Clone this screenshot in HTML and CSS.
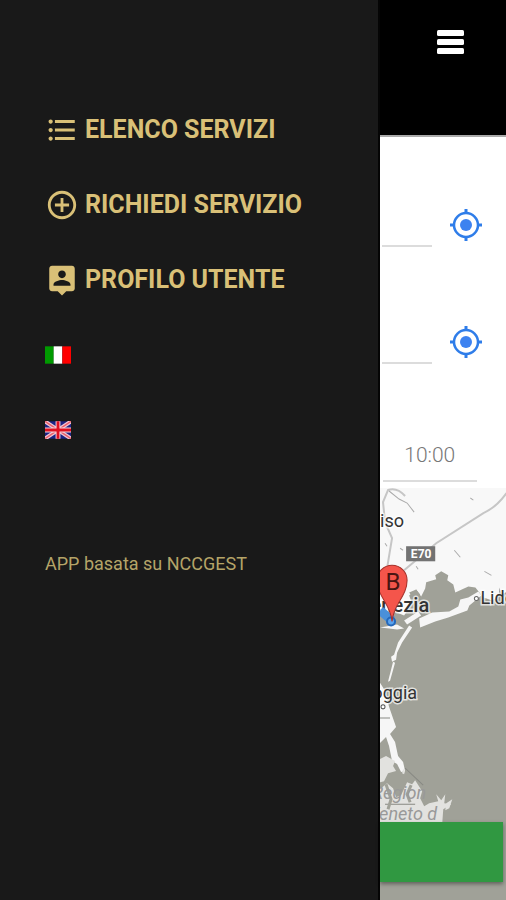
FILE: index.html
```html
<!DOCTYPE html>
<html lang="it">
<head>
  <meta charset="UTF-8">
  <meta name="viewport" content="width=device-width, initial-scale=1.0">
  <title>Richiedi servizio</title>
  <link rel="stylesheet" href="styles.css">
</head>

<body>
  <nav class="menu">
    <a class="menu-item" href="#elenco">
      <svg class="menu-icon" viewBox="0 0 24 24">
        <path d="M4 10.500c-.83 0-1.500.67-1.500 1.500s.67 1.500 1.500 1.500 1.500-.67 1.500-1.500-.67-1.500-1.500-1.500zm0-6c-.83 0-1.500.67-1.500 1.500S3.170 7.500 4 7.500 5.500 6.830 5.500 6 4.830 4.500 4 4.500zm0 12c-.83 0-1.500.68-1.500 1.500s.68 1.500 1.500 1.500 1.500-.68 1.500-1.500-.67-1.500-1.500-1.500zM7 19h14v-2H7v2zm0-6h14v-2H7v2zm0-8v2h14V5H7z"/>
      </svg>
      <span>ELENCO SERVIZI</span>
    </a>
    <a class="menu-item" href="#richiedi">
      <svg class="menu-icon" viewBox="0 0 24 24">
        <path d="M13 7h-2v4H7v2h4v4h2v-4h4v-2h-4V7zm-1-5C6.480 2 2 6.480 2 12s4.480 10 10 10 10-4.480 10-10S17.520 2 12 2zm0 18c-4.410 0-8-3.590-8-8s3.590-8 8-8 8 3.590 8 8-3.590 8-8 8z"/>
      </svg>
      <span>RICHIEDI SERVIZIO</span>
    </a>
    <a class="menu-item" href="#profilo">
      <svg class="menu-icon" viewBox="0 0 24 24">
        <path d="M19 2H5c-1.110 0-2 .9-2 2v14c0 1.100.89 2 2 2h4l3 3 3-3h4c1.100 0 2-.9 2-2V4c0-1.100-.9-2-2-2zm-7 3.300c1.490 0 2.700 1.210 2.700 2.700s-1.210 2.700-2.700 2.700S9.300 9.490 9.300 8s1.210-2.700 2.700-2.700zM18 16H6v-.9c0-2 4-3.100 6-3.100s6 1.100 6 3.100v.9z"/>
      </svg>
      <span>PROFILO UTENTE</span>
    </a>
    <a class="menu-item" href="#it" aria-label="Italiano">
      <svg class="flag" viewBox="0 0 27 18">
        <rect width="9" height="18" fill="#009a00"/>
        <rect x="9" width="9" height="18" fill="#fff"/>
        <rect x="18" width="9" height="18" fill="#f00"/>
      </svg>
    </a>
    <a class="menu-item" href="#en" aria-label="English">
      <svg class="flag" viewBox="0 0 27 18">
        <rect width="27" height="18" fill="#1c2484"/>
        <path d="M0 0l27 18M27 0L0 18" stroke="#f3c8d4" stroke-width="4"/>
        <path d="M0 0l27 18M27 0L0 18" stroke="#e8606c" stroke-width="1.500"/>
        <path d="M13.500 0v18M0 9h27" stroke="#f6d5dc" stroke-width="5"/>
        <path d="M13.500 0v18M0 9h27" stroke="#e01020" stroke-width="3"/>
      </svg>
    </a>
    <p class="credits">APP basata su NCCGEST</p>
  </nav>

  <main class="page">
    <header class="topbar">
      <button class="toggle" type="button" aria-label="Menu">
        <svg viewBox="0 0 28 24" width="28" height="24">
          <rect x="1" y="0" width="27" height="6" rx="1.500"/>
          <rect x="1" y="9" width="27" height="6" rx="1.500"/>
          <rect x="1" y="18" width="27" height="6" rx="1.500"/>
        </svg>
      </button>
    </header>

    <form class="form">
      <div class="row">
        <input class="field" type="text" aria-label="Partenza">
        <button class="locate" type="button" aria-label="Posizione di partenza">
          <svg viewBox="0 0 32 32" width="32" height="32">
            <path d="M16 0v5M16 27v5M0 16h5M27 16h5" stroke-width="3"/>
            <circle cx="16" cy="16" r="12" stroke-width="2.500"/>
            <circle class="dot" cx="16" cy="16" r="6"/>
          </svg>
        </button>
      </div>
      <div class="row">
        <input class="field" type="text" aria-label="Arrivo">
        <button class="locate" type="button" aria-label="Posizione di arrivo">
          <svg viewBox="0 0 32 32" width="32" height="32">
            <path d="M16 0v5M16 27v5M0 16h5M27 16h5" stroke-width="3"/>
            <circle cx="16" cy="16" r="12" stroke-width="2.500"/>
            <circle class="dot" cx="16" cy="16" r="6"/>
          </svg>
        </button>
      </div>
      <div class="row row-time">
        <input class="field time" type="text" value="10:00" aria-label="Ora">
      </div>
    </form>

    <div class="map">
      <svg class="map-canvas" viewBox="0 0 126 412" preserveAspectRatio="xMinYMin slice">
        <rect width="126" height="412" fill="#f8f8f8"/>

        <!-- roads -->
        <g fill="none" stroke="#c6c6c6" stroke-width="2">
          <path d="M7 80L12 50 5 34 3 14 8 2Q17-1 25 8"/>
          <path d="M24 82L56 55 103 25Q116 19 126 5"/>
          <path d="M9 3l10 8 8 4 7 9" stroke="#aaa" stroke-width="1"/>
          <path d="M74 62l6 7M104 83l7 4M90 10l3 2M5 55l2 3M36 78l2 3M20 60l3 2" stroke="#aaa" stroke-width="1"/>
        </g>

        <!-- sea and lagoon -->
        <path fill="#a0a198" d="M0 124l12-2 12 5 8-12-3-8 7-6 5 7 4-8 1-6 10-3-1-4 6-4 7 4-1 5 6 4 2 8 13-6 7 1 8 10 9 3 6-4 1-9 2 7 8-4V412H0z"/>
        <path fill="#a0a198" d="M29 104l7-3 4 5-6 5z"/>

        <!-- sand bars -->
        <g fill="#f6f6f6">
          <path d="M40 139l-1-9 13-6 17-1 9-5 2-7 8-2 10-6 3 4-12 10-2 5-19 7-13 4z"/>
          <path d="M0 139l17-3 7 4-7 1-8-1zM24 132l14-9 3 4-14 9z"/>
          <path d="M29 137l3 2-10 15-5 10-1 7-4 2-1-5 3-2 4-12z"/>
          <path d="M13 173l2 1-5 18-2 1z"/>
          <path d="M0 194l5 8 4 16 7 20-6 7 5 8 3 14 5 6 2 9-4 1-4-8-5-3-3-15-3-9-6 6z"/>
        </g>

        <!-- Po delta -->
        <g fill="#e2e2df">
          <path d="M0 270l6-3 9 5-2 5 3 5-8 2-4 8-4 1z"/>
          <path d="M0 300l7-6 6 5 3 9 5-2 6-13 5 2 3-4 7 11-2 7 4 8 5-3 9-2-2-7 5 6 4-6-1 9 7 1-8 5-1 14H0z"/>
          <path d="M66 314l6-4-3 9-4 2zM23 280l2 2-1 3-2-1z"/>
        </g>
        <path d="M25 279l18 17M0 229h10M5 315h30" fill="none" stroke="#888983" stroke-width="1"/>
        <path d="M6 295l5 15-3 10M31 296l-4 9 3 8" fill="none" stroke="#a0a198" stroke-width="3"/>

        <!-- road shield -->
        <rect x="26" y="58" width="29" height="15" fill="#737373"/>
        <text class="shield" x="41" y="70">E70</text>

        <!-- place names -->
        <text class="place town" x="24" y="39">Treviso</text>
        <text class="place" x="49" y="124">Venezia</text>
        <text class="place town" x="37" y="210">Chioggia</text>
        <circle cx="96" cy="110" r="2" fill="#fff" stroke="#666"/>
        <circle cx="3" cy="218" r="2" fill="#fff" stroke="#555"/>
        <text class="place town start" x="100" y="116">Lido di</text>
        <text class="region" x="46" y="310">Region</text>
        <text class="region" x="57" y="331">Veneto d</text>

        <!-- marker -->
        <path d="M0 122l12 10" stroke="#4a90d9" stroke-width="9"/>
        <circle cx="11" cy="133" r="4" fill="#5ba4ee" stroke="#2468bb" stroke-width="2"/>
        <path d="M12 133C11 116-3 108-3 92A15 15 0 0 1 27 92C27 108 13 116 12 133z" fill="#f4554b" stroke="#a5302a"/>
        <text class="pin" x="13" y="102">B</text>
      </svg>
      <button class="confirm" type="submit" aria-label="Conferma"></button>
    </div>
  </main>
</body>
</html>
```

FILE: styles.css
```css
* {
  margin: 0;
  padding: 0;
  box-sizing: border-box;
}

body {
  display: flex;
  min-height: 100vh;
  font-family: Roboto, sans-serif;
  background-color: #fff;
  overflow-x: hidden;
}

button {
  border: none;
  background: none;
  cursor: pointer;
}

svg {
  display: block;
}

/* side menu */
.menu {
  flex: 0 0 75%;
  padding: 92px 24px 24px 45px;
  background-color: #191919;
  border-right: 2px solid #050505;
  color: #d9c077;
}

.menu-item {
  display: flex;
  align-items: center;
  gap: 6px;
  height: 75px;
  color: #d9c077;
  font-size: 25px;
  font-weight: 700;
  text-decoration: none;
  white-space: nowrap;
}

.menu-icon {
  width: 34px;
  height: 34px;
  fill: #d9c077;
}

.flag {
  width: 26px;
  height: 18px;
}

.credits {
  margin-top: 85px;
  color: #b5a468;
  font-size: 18px;
  line-height: 24px;
}

/* page behind the menu */
.page {
  flex: 1;
  min-width: 0;
  display: flex;
  flex-direction: column;
}

.topbar {
  display: flex;
  justify-content: flex-end;
  height: 137px;
  padding: 30px 42px;
  background-color: #000;
  border-bottom: 2px solid #aaa;
}

.toggle {
  height: 24px;
  fill: #fff;
}

.row {
  display: flex;
  align-items: flex-end;
  height: 117px;
  padding: 0 24px 7px 2px;
}

.field {
  flex: 1;
  min-width: 0;
  height: 42px;
  border: none;
  border-bottom: 2px solid #dcdcdc;
  background: none;
  font-family: inherit;
  font-size: 22px;
  outline: none;
}

.locate {
  margin: 0 0 6px 18px;
  fill: none;
  stroke: #2f7de9;
}

.locate .dot {
  fill: #3d82f0;
  stroke: none;
}

.row-time {
  padding: 0 29px 6px 3px;
}

.time {
  height: 52px;
  color: #777;
  font-size: 21px;
  font-weight: 300;
  text-align: center;
}

/* map */
.map {
  flex: 1;
  position: relative;
  min-height: 400px;
  background-color: #a0a198;
}

.map-canvas {
  position: absolute;
  width: 100%;
  height: 100%;
}

.place {
  font-size: 20px;
  font-weight: 500;
  fill: #333;
  stroke: #fff;
  stroke-width: 3px;
  stroke-opacity: 0.7;
  paint-order: stroke;
  text-anchor: end;
}

.town {
  font-size: 18px;
  font-weight: 400;
}

.start {
  text-anchor: start;
}

.region {
  font-size: 18px;
  font-style: italic;
  fill: #999;
  text-anchor: end;
}

.shield {
  font-size: 12px;
  font-weight: 700;
  fill: #fff;
  text-anchor: middle;
}

.pin {
  font-size: 24px;
  fill: #4a1512;
  text-anchor: middle;
}

.confirm {
  position: absolute;
  left: 0;
  right: 3px;
  bottom: 18px;
  height: 60px;
  background-color: #309841;
  box-shadow: 0 2px 4px rgba(0, 0, 0, 0.4);
}
```
